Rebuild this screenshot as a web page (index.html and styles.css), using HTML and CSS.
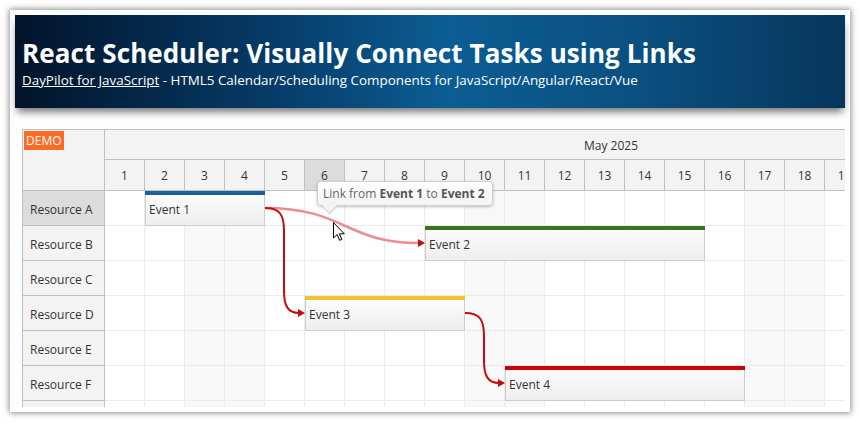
FILE: index.html
```html
<!DOCTYPE html>
<html>
<head>
<meta charset="utf-8">
<title>React Scheduler: Visually Connect Tasks using Links</title>
<link rel="stylesheet" href="styles.css">
</head>
<body>
<div class="panel">
  <header class="hero">
    <h1 class="title">React Scheduler: Visually Connect Tasks using Links</h1>
    <div class="subtitle"><a href="#" class="sublink">DayPilot for JavaScript</a> - HTML5 Calendar/Scheduling Components for JavaScript/Angular/React/Vue</div>
  </header>
  <main class="main">
    <div class="sched">
      <div class="corner"><span class="demo">DEMO</span></div>
      <div class="timehdr">
        <div class="month">May 2025</div>
        <div class="days">
          <div class="day">1</div><div class="day">2</div><div class="day">3</div><div class="day">4</div><div class="day">5</div>
          <div class="day day-hover">6</div><div class="day">7</div><div class="day">8</div><div class="day">9</div><div class="day">10</div>
          <div class="day">11</div><div class="day">12</div><div class="day">13</div><div class="day">14</div><div class="day">15</div>
          <div class="day">16</div><div class="day">17</div><div class="day">18</div><div class="day">19</div>
        </div>
      </div>
      <div class="rows">
        <div class="res res-hover">Resource A</div>
        <div class="res">Resource B</div>
        <div class="res">Resource C</div>
        <div class="res">Resource D</div>
        <div class="res">Resource E</div>
        <div class="res">Resource F</div>
        <div class="res"></div>
      </div>
      <div class="grid">
        <div class="col"></div><div class="col"></div><div class="col we"></div><div class="col we"></div><div class="col"></div>
        <div class="col"></div><div class="col"></div><div class="col"></div><div class="col"></div><div class="col we"></div>
        <div class="col we"></div><div class="col"></div><div class="col"></div><div class="col"></div><div class="col"></div>
        <div class="col"></div><div class="col we"></div><div class="col we"></div><div class="col"></div>

        <div class="event ev-blue" style="left:40px;top:0;width:120px">Event 1</div>
        <div class="event ev-green" style="left:320px;top:35px;width:280px">Event 2</div>
        <div class="event ev-yellow" style="left:200px;top:105px;width:160px">Event 3</div>
        <div class="event ev-red" style="left:400px;top:175px;width:240px">Event 4</div>

        <svg class="links" width="740" height="230" viewBox="0 0 740 230">
          <path class="link-hover" d="M160,17 C240,17 240,52 314,52"/>
          <polygon class="arrow" points="313,48 320,52 313,56"/>
          <path class="link" d="M160,17 C175,17 179,24 179,40 L179,100 C179,115 183,122 194,122"/>
          <polygon class="arrow" points="193,118 200,122 193,126"/>
          <path class="link" d="M360,122 C375,122 379,129 379,145 L379,170 C379,185 383,192 394,192"/>
          <polygon class="arrow" points="393,188 400,192 393,196"/>
        </svg>
      </div>
      <div class="tooltip">Link from <b>Event 1</b> to <b>Event 2</b></div>
      <svg class="cursor" width="13" height="20" viewBox="0 0 13 20">
        <path d="M0.5,0.5 L0.5,16 L4.2,12.6 L6.6,18.3 L8.8,17.4 L6.4,11.8 L11.3,11.8 Z" fill="#fff" stroke="#000" stroke-width="1"/>
      </svg>
    </div>
  </main>
</div>
</body>
</html>
```
FILE: styles.css
```css
* { box-sizing: border-box; }
html, body { margin: 0; padding: 0; background: #fff; }
body {
  padding: 10px;
  font-family: "Open Sans", "Noto Sans", sans-serif;
  color: #333;
}
.panel {
  width: 840px;
  height: 402px;
  padding: 5px;
  background: #fff;
  box-shadow: 0 0 6px 1px rgba(0,0,0,0.45);
  overflow: hidden;
  display: flex;
  flex-direction: column;
}
.hero {
  height: 93px;
  flex: none;
  padding: 21px 0 0 7px;
  background: linear-gradient(to right, #02142a 0%, #063a66 30%, #0b5d94 52%, #0a5080 75%, #07365d 100%);
  box-shadow: 0 6px 8px -2px rgba(0,0,0,0.55);
  color: #fff;
  position: relative;
  z-index: 1;
}
.title {
  margin: 0;
  font-size: 26px;
  line-height: 35px;
  font-weight: 700;
  letter-spacing: 0.1px;
}
.subtitle {
  font-size: 13.4px;
  line-height: 18px;
}
.sublink { color: #fff; text-decoration: underline; }
.main {
  flex: 1;
  padding: 21px 0 0 7px;
  overflow: hidden;
}
.sched {
  position: relative;
  width: 823px;
  height: 300px;
  border-left: 1px solid #c0c0c0;
  border-top: 1px solid #c0c0c0;
  display: grid;
  grid-template-columns: 82px 1fr;
  grid-template-rows: 61px 1fr;
  overflow: hidden;
  font-size: 12px;
  color: #333;
}
.corner {
  background: #f3f3f3;
  border-right: 1px solid #c0c0c0;
  border-bottom: 1px solid #c0c0c0;
  padding: 1px;
}
.demo {
  display: inline-block;
  background: #ff6a26;
  color: #fff;
  font-size: 12px;
  line-height: 19px;
  padding: 0 2px 0 2px;
}
.timehdr {
  display: flex;
  flex-direction: column;
  background: #f3f3f3;
}
.month {
  height: 30px;
  line-height: 31px;
  border-bottom: 1px solid #c0c0c0;
  padding-left: 479px;
}
.days { display: flex; }
.day {
  flex: none;
  width: 40px;
  height: 31px;
  line-height: 31px;
  text-align: center;
  border-right: 1px solid #c0c0c0;
  border-bottom: 1px solid #c0c0c0;
}
.day-hover { background: #dcdcdc; }
.rows { display: flex; flex-direction: column; }
.res {
  flex: none;
  height: 35px;
  padding: 2px 0 0 7px;
  line-height: 33px;
  background: #f3f3f3;
  border-right: 1px solid #c0c0c0;
  border-bottom: 1px solid #c0c0c0;
}
.res-hover { background: #dcdcdc; }
.grid {
  position: relative;
  display: flex;
}
.col {
  flex: none;
  width: 40px;
  border-right: 1px solid #ebebeb;
  background-image: repeating-linear-gradient(to bottom, transparent 0, transparent 34px, #ebebeb 34px, #ebebeb 35px);
}
.col.we { background-color: #f8f8f8; }
.event {
  position: absolute;
  height: 35px;
  padding: 4px 0 0 3px;
  line-height: 30px;
  border: 1px solid #cccccc;
  border-top: none;
  background: linear-gradient(to bottom, #fdfdfd, #eeeeee);
  color: #333;
  font-size: 12px;
}
.event::before {
  content: "";
  position: absolute;
  left: -1px;
  right: -1px;
  top: 0;
  height: 4px;
  background: var(--bar);
}
.ev-blue { --bar: #1d5f9c; }
.ev-green { --bar: #38761d; }
.ev-yellow { --bar: #f1c232; }
.ev-red { --bar: #cc0000; }
.links {
  position: absolute;
  left: 0;
  top: 0;
  overflow: visible;
}
.link { fill: none; stroke: #c8090e; stroke-width: 2; }
.link-hover { fill: none; stroke: #ec8d8d; stroke-width: 2.5; }
.arrow { fill: #c8090e; }
.tooltip {
  position: absolute;
  left: 294px;
  top: 51px;
  width: 176px;
  height: 25px;
  line-height: 24px;
  padding-left: 5px;
  white-space: nowrap;
  background: linear-gradient(to bottom, #ffffff, #f3f3f3);
  border: 1px solid #cfcfcf;
  border-radius: 4px;
  box-shadow: 0 1px 3px rgba(0,0,0,0.25);
  color: #666;
  font-size: 12px;
  z-index: 3;
}
.tooltip b { color: #555; font-weight: 700; }
.tooltip::after {
  content: "";
  position: absolute;
  left: 6px;
  bottom: -7px;
  width: 10px;
  height: 10px;
  background: #f3f3f3;
  border-right: 1px solid #cfcfcf;
  border-bottom: 1px solid #cfcfcf;
  transform: rotate(45deg);
}
.cursor {
  position: absolute;
  left: 310px;
  top: 92px;
  z-index: 4;
}
```
